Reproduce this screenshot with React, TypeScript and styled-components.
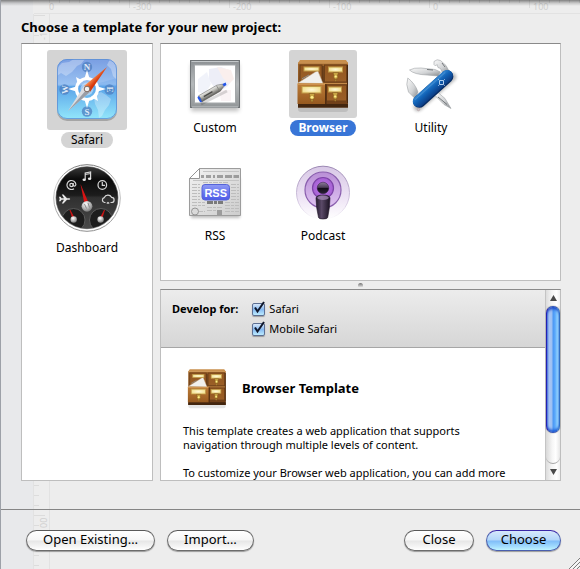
import React, { useState } from "react";
import styled, { createGlobalStyle, css } from "styled-components";

const GlobalStyle = createGlobalStyle`
  *, *::before, *::after { box-sizing: border-box; }
  html, body { margin: 0; padding: 0; background: #ededed; }
  body {
    font-family: "Noto Sans", "Open Sans", sans-serif;
    font-size: 12px;
    color: #000;
  }
  button, input { font: inherit; color: inherit; }
`;

const Sheet = styled.main`
  position: relative;
  display: flex;
  flex-direction: column;
  height: 100vh;
  min-height: 420px;
  border-left: 1px solid #9da1a8;
  background: linear-gradient(to right, #e8e9eb 0 32px, #ededed 32px);
  overflow: hidden;
`;

const Backdrop = styled.svg`
  position: absolute;
  inset: 0;
  width: 100%;
  height: 100%;
  pointer-events: none;
`;

const TopShadow = styled.div`
  position: absolute;
  inset: 0 0 auto 0;
  height: 6px;
  background: linear-gradient(rgba(0, 0, 0, 0.46), rgba(0, 0, 0, 0.16) 50%, rgba(0, 0, 0, 0));
`;

const Body = styled.section`
  position: relative;
  flex: 1;
  min-height: 0;
  display: flex;
  flex-direction: column;
  padding: 19px 19px 28px 20px;
  border-bottom: 1px solid #858585;
`;

const Title = styled.h1`
  margin: 0;
  height: 24px;
  font-size: 13px;
  line-height: 17px;
  font-weight: 700;
  white-space: nowrap;
`;

const Columns = styled.div`
  flex: 1;
  min-height: 0;
  display: grid;
  grid-template-columns: 132px minmax(0, 1fr);
  gap: 7px;
`;

const paneFrame = css`
  background: #fff;
  border: 1px solid #bebebe;
  border-top-color: #8a8a8a;
`;

const Sidebar = styled.nav`
  ${paneFrame}
  display: flex;
  flex-direction: column;
  align-items: center;
  gap: 10px;
  padding-top: 6px;
`;

const Detail = styled.div`
  display: flex;
  flex-direction: column;
  min-height: 0;
`;

const Gallery = styled.div`
  ${paneFrame}
  flex: 230 1 0;
  min-height: 0;
  display: grid;
  grid-template-columns: repeat(auto-fill, 108px);
  grid-auto-rows: 108px;
  align-items: start;
  justify-items: center;
  padding-top: 6px;
`;

const Splitter = styled.div`
  height: 8px;
  display: flex;
  align-items: center;
  justify-content: center;
`;

const Dimple = styled.span`
  width: 5px;
  height: 5px;
  border-radius: 50%;
  background: linear-gradient(#707070, #fafafa);
`;

const TileButton = styled.button`
  display: flex;
  flex-direction: column;
  align-items: center;
  gap: 2px;
  padding: 0;
  border: 0;
  background: none;
`;

const TileArt = styled.span<{ $selected: boolean; $size: number }>`
  display: block;
  width: ${(p) => p.$size}px;
  height: ${(p) => p.$size}px;
  border-radius: 3px;
  background: ${(p) => (p.$selected ? "#d4d4d4" : "transparent")};
  svg { display: block; }
`;

const TileLabel = styled.span<{ $tone: "plain" | "quiet" | "active" }>`
  height: 16px;
  padding: 0 10px;
  border-radius: 8px;
  font-size: 12px;
  line-height: 16px;
  white-space: nowrap;
  ${(p) => p.$tone === "quiet" && css`background: #d4d4d4;`}
  ${(p) => p.$tone === "active" && css`padding: 0 8px; background: #3875d7; color: #fff; font-weight: 700;`}
`;

const InfoPane = styled.div`
  ${paneFrame}
  flex: 190 1 0;
  min-height: 0;
  display: flex;
`;

const InfoScroll = styled.div`
  flex: 1;
  min-width: 0;
  overflow: hidden;
`;

const Options = styled.fieldset`
  display: flex;
  align-items: flex-start;
  gap: 14px;
  margin: 0;
  padding: 9px 11px;
  height: 58px;
  border: 0;
  border-bottom: 1px solid #a6a6a6;
  background: linear-gradient(#ececec, #d6d6d6);
  font-size: 11px;
  line-height: 20px;
`;

const OptionsTitle = styled.span`
  font-weight: 700;
`;

const OptionList = styled.div`
  display: flex;
  flex-direction: column;
`;

const OptionLabel = styled.label`
  display: flex;
  align-items: center;
  gap: 3px;
  height: 20px;
`;

const CheckWrap = styled.span`
  position: relative;
  display: block;
  width: 14px;
  height: 14px;
  svg { position: absolute; inset: 0; pointer-events: none; overflow: visible; }
`;

const Check = styled.input`
  appearance: none;
  display: block;
  width: 13px;
  height: 13px;
  margin: 1px 0 0 0;
  border: 1px solid #5d6f92;
  border-radius: 2px;
  background: #fff;
  box-shadow: 0 1px 1px rgba(0, 0, 0, 0.3);
  &:checked { background: linear-gradient(#d8e8fa, #86b9f1 50%, #bdecff); }
  &:not(:checked) + svg { display: none; }
`;

const Article = styled.article`
  padding: 19px 22px;
  font-size: 11px;
  line-height: 14px;
`;

const ArticleHead = styled.header`
  display: flex;
  align-items: center;
  gap: 15px;
  height: 42px;
  margin-bottom: 15px;
  padding-left: 4px;
`;

const ArticleTitle = styled.h2`
  margin: 0;
  font-size: 13px;
  line-height: 16px;
  font-weight: 700;
`;

const Paragraph = styled.p<{ $measure?: number }>`
  margin: 0 0 14px;
  max-width: ${(p) => p.$measure ?? 350}px;
`;

const ScrollRail = styled.div`
  width: 15px;
  display: flex;
  flex-direction: column;
  border-left: 1px solid #c4c4c4;
  background: linear-gradient(to right, #dcdcdc, #f4f4f4 40%, #fff 75%, #f0f0f0);
`;

const RailButton = styled.button`
  display: flex;
  align-items: center;
  justify-content: center;
  height: 16px;
  padding: 0;
  border: 0;
  background: none;
`;

const RailTrack = styled.div`
  flex: 1;
  border-radius: 0 0 7px 7px;
  border-bottom: 1px solid #a8a8a8;
  background: linear-gradient(to right, #d8d8d8, #f6f6f6 45%, #fff 70%, #e6e6e6);
`;

const RailThumb = styled.div`
  height: 81%;
  border-radius: 7px;
  border: 1px solid #2c50b8;
  border-left-color: #2420b4;
  border-right-color: #2f6fc4;
  background: linear-gradient(
    to right,
    #5d84e4 0, #a9c6f4 2px, #9cc0f3 5px, #4b97f3 6px, #5aa8fb 8px, #9cdcff 11px, #7fb9f4 12px
  );
  box-shadow: inset 0 3px 3px -1px #1a45c4, inset 0 -3px 3px -1px #1a58d4, 0 0 1px #333;
`;

const Footer = styled.footer`
  position: relative;
  display: flex;
  align-items: flex-start;
  gap: 12px;
  height: 59px;
  padding: 20px 19px 0 25px;
`;

const Spacer = styled.span`
  flex: 1;
`;

const AquaButton = styled.button<{ $primary?: boolean; $width: number }>`
  min-width: ${(p) => p.$width}px;
  height: 21px;
  padding: 0 8px 2px;
  border-radius: 11px;
  border: 1px solid ${(p) => (p.$primary ? "#4a5fae" : "#6c6c6c")};
  border-top-color: ${(p) => (p.$primary ? "#3a28a8" : "#5a5a5a")};
  background: ${(p) =>
    p.$primary
      ? "linear-gradient(#d6e8fb, #b2d6fa 48%, #7fbcf8 52%, #a0dafe 80%, #bff4ff)"
      : "linear-gradient(#ffffff, #f6f6f6 48%, #e6e6e6 52%, #f4f4f4 80%, #ffffff)"};
  box-shadow: 0 1px 1px rgba(0, 0, 0, 0.35);
  font-size: 13px;
  line-height: 17px;
  white-space: nowrap;
`;

const ResizeGrip = styled.svg`
  position: absolute;
  right: 0;
  bottom: 0;
`;

const range = (n: number) => Array.from({ length: n }, (_, i) => i);

function Rulers() {
  return (
    <Backdrop aria-hidden="true" stroke="#dcdcdc" fill="none" fontSize="9">
      <path d="M33 13.5H3000M32.5 14V3000M48.5 14V3000" stroke="#e2e2e2" />
      {range(200).map((i) => (
        <path key={i} d={`M${48.5 + i * 10} 0V${i % 10 === 8 ? 8 : 3}`} />
      ))}
      {range(200).map((i) => (
        <path key={i} d={`M33 ${15.5 + i * 10}H${i % 10 === 0 ? 44 : 38}`} />
      ))}
      <g stroke="none" fill="#d0d0d0">
        <text x="48" y="10">0</text>
        {range(5).map((i) => (
          <text key={i} x={132 + i * 100} y="10">{i * 100 - 300}</text>
        ))}
        <text transform="translate(46 40) rotate(-90)">-10</text>
        <text transform="translate(46 528) rotate(-90)">00</text>
      </g>
    </Backdrop>
  );
}

function SafariIcon() {
  return (
    <svg width="80" height="80" viewBox="0 0 80 80" aria-hidden="true">
      <defs>
        <linearGradient id="sfSky" x1="0" y1="0" x2="0" y2="1">
          <stop offset="0" stopColor="#6791df" />
          <stop offset=".42" stopColor="#8cbaf0" />
          <stop offset=".46" stopColor="#5aa3e8" />
          <stop offset="1" stopColor="#92e6fb" />
        </linearGradient>
        <linearGradient id="sfRed" x1="0" y1="0" x2="1" y2="1">
          <stop offset=".4" stopColor="#f58a50" />
          <stop offset=".55" stopColor="#d83a0c" />
          <stop offset="1" stopColor="#a52000" />
        </linearGradient>
        <clipPath id="sfClip"><rect x="10" y="9" width="60" height="60" rx="10" /></clipPath>
      </defs>
      <rect x="10" y="11" width="60" height="60" rx="10" fill="#000" opacity=".22" />
      <rect x="10" y="9" width="60" height="60" rx="10" fill="url(#sfSky)" />
      <g clipPath="url(#sfClip)" fill="#fff" opacity=".3">
        <path d="M10 18L15 13 22 12 27 9H38L34 14 30 16 25 22 19 26 14 23 10 26Z" />
        <path d="M63 9L70 9V30L66 26 64 19 60 15Z" />
        <path d="M49 44L54 42 59 45 64 49 62 55 58 60 55 66 52 68 51 60 48 54 47 48Z" />
      </g>
      <path d="M10 35.500Q40 38 70 28V18.500Q70 9 60 9H20Q10 9 10 18.500Z" fill="#fff" opacity=".12" />
      <rect x="10.500" y="9.500" width="59" height="59" rx="9.500" fill="none" stroke="#5c8fd4" opacity=".8" />
      <g fill="#4f7fc0" opacity=".75">
        <circle cx="40" cy="17" r="5.200" /><circle cx="40" cy="61.500" r="5.200" />
        <circle cx="17.500" cy="39.500" r="5.200" /><circle cx="62.500" cy="39.500" r="5.200" />
      </g>
      <g fill="#dfe9f6" fontFamily="Liberation Serif, serif" fontSize="9" fontWeight="700" textAnchor="middle">
        <text x="40" y="20">N</text>
        <text x="40" y="64.500">S</text>
        <text transform="translate(20.500 39.500) rotate(-90)">W</text>
        <text transform="translate(59.500 39.500) rotate(90)">E</text>
      </g>
      <circle cx="40" cy="39" r="10.500" fill="none" stroke="#fff" strokeWidth="3.200" />
      <path
        fill="#fff"
        d="M40 20L43 30H37ZM40 58L43 48H37ZM21 39L31 36V42ZM59 39L49 36V42ZM29 27L36 31 31 35ZM51 27L44 31 49 35ZM29 51L36 47 31 43ZM51 51L44 47 49 43Z"
      />
      <circle cx="40" cy="39" r="6.500" fill="#cfe4fa" opacity=".6" />
      <path d="M60 17L43 42 37 36Z" fill="url(#sfRed)" />
      <path d="M21 61L37 36 43 42Z" fill="#dcdde0" />
      <path d="M21 61L40 39 43 42Z" fill="#9a9ea6" />
      <circle cx="40" cy="39" r="2.800" fill="#f2f2f2" stroke="#7c6a62" />
    </svg>
  );
}

function DashboardIcon() {
  return (
    <svg width="80" height="80" viewBox="0 0 80 80" aria-hidden="true">
      <defs>
        <linearGradient id="dbFace" x1="0" y1="0" x2="0" y2="1">
          <stop offset="0" stopColor="#3a3a3a" />
          <stop offset=".2" stopColor="#0b0b0b" />
          <stop offset=".46" stopColor="#1c1c1c" />
          <stop offset=".5" stopColor="#303030" />
          <stop offset="1" stopColor="#4a4a4a" />
        </linearGradient>
        <linearGradient id="dbRim" x1="0" y1="0" x2="0" y2="1">
          <stop offset="0" stopColor="#777" />
          <stop offset=".3" stopColor="#ccc" />
          <stop offset="1" stopColor="#8c8c8c" />
        </linearGradient>
        <radialGradient id="dbHub" cx=".4" cy=".3" r=".8">
          <stop offset="0" stopColor="#fff" />
          <stop offset=".5" stopColor="#b9b9b9" />
          <stop offset="1" stopColor="#666" />
        </radialGradient>
        <clipPath id="dbClip"><circle cx="40" cy="39.700" r="30.500" /></clipPath>
      </defs>
      <circle cx="40" cy="40" r="33.300" fill="#fff" stroke="url(#dbRim)" />
      <circle cx="40" cy="39.700" r="31" fill="url(#dbFace)" stroke="#444" strokeWidth=".6" />
      <g clipPath="url(#dbClip)">
        <circle cx="26.500" cy="62" r="11.500" fill="#1d1d1d" stroke="#5b5b5b" />
        <circle cx="54" cy="62" r="11.500" fill="#1d1d1d" stroke="#5b5b5b" />
      </g>
      <path d="M33.500 26L42.500 47 38 48.500Z" fill="#d81414" />
      <path d="M23 52L28 61 26 62ZM57.500 52L54.500 62 52.500 61Z" fill="#d81414" stroke="#d81414" strokeWidth=".6" />
      <circle cx="40" cy="48.300" r="5.400" fill="url(#dbHub)" />
      <path d="M37.500 46L39.500 50.500M41 45L42.500 49.500" stroke="#777" strokeWidth=".8" />
      <circle cx="26.700" cy="61.500" r="3.200" fill="url(#dbHub)" />
      <circle cx="53.600" cy="61.500" r="3.200" fill="url(#dbHub)" />
      <g fill="none" stroke="#d6d6d6" strokeWidth="1.200">
        <path d="M38.200 21.500V15L43.600 14V20.500M38.200 16.500L43.600 15.500" />
        <circle cx="55.300" cy="27" r="4.300" />
        <path d="M55.300 24V27.300H58" />
        <path d="M57.500 44.500A2.500 2.500 0 0 1 57.300 39.600 4 4 0 0 1 64.500 39.300 2.600 2.600 0 0 1 64.500 44.500H63.500M57 44.500H58.500" />
        <path d="M59.800 45.500L61 44.600 62.200 45.500" />
        <circle cx="24.500" cy="27" r="1.700" />
        <path d="M26.200 25V27.600Q28.500 29 28.900 26.500A4.500 4.500 0 1 0 27 30.700" />
      </g>
      <g fill="#e8e8e8">
        <ellipse cx="37.200" cy="21.800" rx="1.700" ry="1.300" />
        <ellipse cx="42.600" cy="20.800" rx="1.700" ry="1.300" />
        <path d="M12 38.800L13.500 38.800 14.600 40.200H17L14.800 36.500H16.500L20 40.200H22.500Q24 41 22.500 41.800H20L16.500 45.500H14.800L17 41.800H14.600L13.500 43.200H12L12.700 41Z" />
      </g>
    </svg>
  );
}

function CabinetArt() {
  return (
    <>
      <defs>
        <linearGradient id="cbWood" x1="0" y1="0" x2="0" y2="1">
          <stop offset="0" stopColor="#a2672c" />
          <stop offset="1" stopColor="#6b3c17" />
        </linearGradient>
        <linearGradient id="cbDrawer" x1="0" y1="0" x2="0" y2="1">
          <stop offset="0" stopColor="#94571f" />
          <stop offset="1" stopColor="#9a5f28" />
        </linearGradient>
        <linearGradient id="cbFront" x1="0" y1="0" x2="0" y2="1">
          <stop offset="0" stopColor="#bd7c38" />
          <stop offset="1" stopColor="#96591f" />
        </linearGradient>
        <radialGradient id="cbPlate" cx=".5" cy=".5" r=".6">
          <stop offset="0" stopColor="#fff9d8" />
          <stop offset="1" stopColor="#f0dc86" />
        </radialGradient>
      </defs>
      <rect x="9" y="13" width="50" height="49" rx="3" fill="#000" opacity=".1" />
      <path d="M11 10H57L59 13H9Z" fill="#c88f4c" />
      <rect x="9" y="12.500" width="50" height="45" fill="url(#cbWood)" />
      <path d="M9 13H59" stroke="#d9a463" />
      <rect x="11" y="15" width="22" height="17" fill="url(#cbDrawer)" stroke="#6b3f18" />
      <rect x="35.500" y="15" width="22" height="17" fill="url(#cbDrawer)" stroke="#6b3f18" />
      <rect x="37.500" y="35" width="20" height="16" fill="url(#cbDrawer)" stroke="#6b3f18" />
      <path d="M35 33.500H59" stroke="#c58a48" />
      <path d="M9 54H59V57.500H9Z" fill="#43260f" />
      <path d="M34 16V32M58.500 15V53" stroke="#4a280e" />
      <path d="M9 33L28.700 20.500 34 33.500Z" fill="#f1f0ed" stroke="#c9b79c" strokeWidth=".5" />
      <path d="M13 28.800L20 25" stroke="#8e8e8e" strokeWidth="1" />
      <rect x="8.500" y="33.500" width="28" height="20.500" fill="url(#cbFront)" />
      <path d="M8.500 34H36.500" stroke="#dfa967" />
      <path d="M36.800 34V54" stroke="#3c1f0a" />
      <g fill="url(#cbPlate)" stroke="#c09a48" strokeWidth="1">
        <rect x="15" y="17" width="15" height="4" />
        <rect x="39.500" y="17" width="14" height="5" />
        <rect x="13" y="36.500" width="19" height="6.500" />
        <rect x="39.500" y="37" width="13" height="5" />
      </g>
      <g fill="#c9a544" stroke="#7a521c" strokeWidth=".5">
        <path d="M44 22.500H49.500L48.500 25.500A2.200 2.200 0 1 1 45 25.500ZM43.500 42.500H49L48 45.500A2.200 2.200 0 1 1 44.500 45.500ZM20 43.500H26L25 46A2.500 2.500 0 1 1 21 46Z" />
        <path d="M45.500 29.500H48L46.800 31.500ZM45 49.500H47.500L46.200 51.500ZM21.500 50H24.500L23 52.500Z" />
      </g>
      <g fill="#fff08c"><circle cx="46.700" cy="26.500" r="1.100" /><circle cx="46.200" cy="46.500" r="1.100" /><circle cx="23" cy="47.300" r="1.400" /></g>
    </>
  );
}

function BrowserIcon() {
  return (
    <svg width="68" height="68" viewBox="0 0 68 68" aria-hidden="true"><CabinetArt /></svg>
  );
}

function SmallCabinet() {
  return (
    <svg width="40" height="42" viewBox="8 7 52 56" aria-hidden="true"><CabinetArt /></svg>
  );
}

function CustomIcon() {
  return (
    <svg width="68" height="68" viewBox="0 0 68 68" aria-hidden="true">
      <defs>
        <linearGradient id="csFrame" x1="0" y1="0" x2="0" y2="1">
          <stop offset="0" stopColor="#8d9194" />
          <stop offset=".5" stopColor="#b4b8ba" />
          <stop offset="1" stopColor="#929698" />
        </linearGradient>
        <linearGradient id="csPen" x1="0" y1="0" x2="0" y2="1">
          <stop offset="0" stopColor="#eeeeec" />
          <stop offset=".45" stopColor="#b4b4ae" />
          <stop offset="1" stopColor="#5c5c58" />
        </linearGradient>
        <filter id="csSoft" x="-20%" y="-20%" width="140%" height="140%"><feGaussianBlur stdDeviation="2" /></filter>
      </defs>
      <rect x="10" y="14" width="48" height="47" fill="#000" opacity=".25" filter="url(#csSoft)" />
      <rect x="9.500" y="10.500" width="49" height="47" fill="url(#csFrame)" stroke="#6f7376" />
      <path d="M10.500 11.500H57.500M11 57H57" stroke="#c4c8ca" />
      <rect x="13.500" y="15" width="41" height="38" fill="#fff" stroke="#a3a7a9" />
      <g opacity=".13">
        <path d="M28 19L40 17 48 20 52 28 47 36 41 40 33 37 28 30Z" fill="#7a86c8" />
        <path d="M36 17L50 20 53 29 48 34 42 28Z" fill="#e08a78" />
        <path d="M17 29L26 22 30 34 24 44 17 42Z" fill="#9aa9de" />
        <path d="M38 40H50V51H40Z" fill="#dfa7b4" />
      </g>
      <path d="M20 54L46 41" stroke="#000" strokeWidth="3" opacity=".14" />
      <g transform="translate(17.500 49.500) rotate(-30)">
        <rect x="0" y="-3" width="3" height="6.800" rx="1.500" fill="#2456e8" />
        <path d="M2 -3.200H23Q26.500 -2 28.500 -1.200V1.400Q26 2.400 23 3.700H2Q3.200 0 2 -3.200Z" fill="url(#csPen)" stroke="#5f5f5c" strokeWidth=".5" />
        <path d="M28.500 -1.500L32 -1.200 31.500 1.500H28.500Z" fill="#2456e8" />
        <path d="M6 .2H16" stroke="#4b4b48" strokeWidth="1.300" />
        <path d="M22.500 -3V3.500" stroke="#7c7c78" strokeWidth=".7" />
      </g>
    </svg>
  );
}

function UtilityIcon() {
  return (
    <svg width="68" height="68" viewBox="0 0 68 68" aria-hidden="true">
      <defs>
        <linearGradient id="utBody" x1="0" y1="0" x2="0" y2="1">
          <stop offset="0" stopColor="#3385d0" />
          <stop offset=".4" stopColor="#1264b8" />
          <stop offset="1" stopColor="#0c3c84" />
        </linearGradient>
        <linearGradient id="utSteel" x1="0" y1="0" x2="1" y2="1">
          <stop offset="0" stopColor="#fafafa" />
          <stop offset=".55" stopColor="#d2d4d6" />
          <stop offset="1" stopColor="#85898c" />
        </linearGradient>
        <filter id="utSoft" x="-30%" y="-30%" width="160%" height="160%"><feGaussianBlur stdDeviation="1.500" /></filter>
      </defs>
      <path d="M21 57L55 27" stroke="#000" strokeWidth="9" strokeLinecap="round" opacity=".25" filter="url(#utSoft)" />
      <g fill="url(#utSteel)" stroke="#a0a3a6" strokeWidth=".6">
        <path d="M10.800 28Q8.500 34 11.500 42L18 48.500 21 42Q18 33.500 10.800 28Z" />
        <path d="M12.500 20Q17 17.500 24 18L38 19.500 43.500 22 41 26 30 25Q17 24.500 12.500 20Z" />
        <path d="M37 11.500Q40 8.500 43.500 10.500L49 15.500 52 21 46 24 43.500 18.500 41 17.500 40 14.500 38.500 16 37 14.500Z" />
        <path d="M38 45.500L41 42.500 48 48.500 54 58.500 47 54.500Z" />
      </g>
      <path d="M30 19.500L36 20M41 47L50 54.500M45 13L48 17" stroke="#676b6e" strokeWidth=".9" />
      <g transform="translate(21 52) rotate(-42)">
        <rect x="-5" y="-5.800" width="50" height="12.600" rx="6.300" fill="#062c63" />
        <rect x="-5" y="-5.800" width="50" height="11.300" rx="5.600" fill="url(#utBody)" />
        <path d="M-1 -3.700H40" stroke="#73b4ea" strokeWidth="1" opacity=".35" />
      </g>
      <path
        d="M42.500 30.500H46.500V34.500H42.500ZM42 30L41.300 29.300M47 30L47.700 29.300M42 35L41.300 35.700M47 35L47.700 35.700"
        fill="none" stroke="#c4ddf6" strokeWidth=".9"
      />
      <circle cx="21.500" cy="59.500" r="1.200" fill="none" stroke="#b6a0a4" strokeWidth=".8" />
    </svg>
  );
}

function RssIcon() {
  return (
    <svg width="68" height="68" viewBox="0 0 68 68" aria-hidden="true">
      <defs>
        <linearGradient id="rsPage" x1="0" y1="0" x2="1" y2="1">
          <stop offset="0" stopColor="#f1f1f1" />
          <stop offset="1" stopColor="#cdcdcd" />
        </linearGradient>
        <linearGradient id="rsBadge" x1="0" y1="0" x2="0" y2="1">
          <stop offset="0" stopColor="#8f9bf5" />
          <stop offset=".5" stopColor="#6a77ee" />
          <stop offset="1" stopColor="#4d5be8" />
        </linearGradient>
        <filter id="rsSoft" x="-20%" y="-20%" width="140%" height="140%"><feGaussianBlur stdDeviation="1.800" /></filter>
      </defs>
      <rect x="10" y="20" width="49" height="40" fill="#000" opacity=".25" filter="url(#rsSoft)" />
      <path d="M18.500 10.500H59.500V57.500H8.500V20.500Z" fill="url(#rsPage)" stroke="#9c9c9c" />
      <path d="M20 18.500H23M25 18.500H30M32 18.500H34M36 18.500H42M44 18.500H51M52.500 18.500H58" stroke="#808080" strokeWidth="3" opacity=".7" />
      <path d="M22 13.500H58M12 22.500H58" stroke="#c4c4c4" />
      <path
        d="M11 26.500H19M11 29.500H19M11 32.500H19M11 35.500H19M11 38.500H19M11 41.500H19M11 44.500H24M11 47.500H24M50 26.500H58M50 29.500H58M50 32.500H58M50 35.500H58M50 38.500H58M50 41.500H58M44 44.500H58M44 47.500H58M26 49.500H41M26 52.500H41M44 50.500H58M44 53.500H58M22 24.500H47M17 53.500H24"
        stroke="#bdbdbd" strokeDasharray="5 1 3 1"
      />
      <path d="M26 44.500H42" stroke="#7a7a7a" strokeWidth="3" strokeDasharray="6 1 3 1" />
      <circle cx="14" cy="53.500" r="3.500" fill="#dadada" stroke="#959595" />
      <rect x="36" y="52" width="5" height="5" fill="#9c9c9c" />
      <path d="M18.500 10.500V20.500H8.500Z" fill="#fff" stroke="#949494" />
      <rect x="21" y="26.500" width="27.500" height="15.500" rx="3" fill="url(#rsBadge)" stroke="#5563d8" />
      <text x="34.700" y="38.500" fill="#fff" fontFamily="Liberation Sans, sans-serif" fontSize="11" fontWeight="700" textAnchor="middle">RSS</text>
    </svg>
  );
}

function PodcastIcon() {
  return (
    <svg width="68" height="68" viewBox="0 0 68 68" aria-hidden="true">
      <defs>
        <linearGradient id="pcOuter" x1="0" y1="0" x2="0" y2="1">
          <stop offset="0" stopColor="#d8c8e6" />
          <stop offset=".6" stopColor="#eee4f5" />
          <stop offset="1" stopColor="#ffffff" />
        </linearGradient>
        <linearGradient id="pcEdge" x1="0" y1="0" x2="0" y2="1">
          <stop offset="0" stopColor="#9a86b2" />
          <stop offset=".7" stopColor="#d8cce4" />
          <stop offset="1" stopColor="#ffffff" />
        </linearGradient>
        <linearGradient id="pcMid" x1="0" y1="0" x2="0" y2="1">
          <stop offset="0" stopColor="#b98fd6" />
          <stop offset="1" stopColor="#e0c5f2" />
        </linearGradient>
        <radialGradient id="pcIn">
          <stop offset="0" stopColor="#c67cf4" />
          <stop offset="1" stopColor="#a35fd0" />
        </radialGradient>
        <linearGradient id="pcHead" x1="0" y1="0" x2="0" y2="1">
          <stop offset="0" stopColor="#8d7d9b" />
          <stop offset=".45" stopColor="#4c3e58" />
          <stop offset=".5" stopColor="#120c18" />
          <stop offset="1" stopColor="#2c2236" />
        </linearGradient>
        <linearGradient id="pcBody" x1="0" y1="0" x2="1" y2="0">
          <stop offset="0" stopColor="#241a2e" />
          <stop offset=".4" stopColor="#5b4a68" />
          <stop offset="1" stopColor="#1a1221" />
        </linearGradient>
      </defs>
      <circle cx="34" cy="34.700" r="26.500" fill="url(#pcOuter)" stroke="url(#pcEdge)" />
      <circle cx="34" cy="32" r="18" fill="url(#pcMid)" stroke="#8a5fae" strokeWidth="1.200" />
      <circle cx="34" cy="30" r="10.500" fill="url(#pcIn)" stroke="#7d43a8" strokeWidth="1.200" />
      <circle cx="34" cy="30" r="5.800" fill="url(#pcHead)" stroke="#2a1c36" strokeWidth=".5" />
      <path d="M27 40Q27.500 37 34 37T41 40Q41 49 38.700 59.500Q38 61 34 61T29.500 59.500Q27 49 27 40Z" fill="url(#pcBody)" stroke="#1c1224" strokeWidth=".6" />
      <ellipse cx="34" cy="39.800" rx="5.800" ry="2.200" fill="#a88bb9" opacity=".75" />
    </svg>
  );
}

type Item = { name: string; Icon: () => React.JSX.Element };

const targets: Item[] = [
  { name: "Safari", Icon: SafariIcon },
  { name: "Dashboard", Icon: DashboardIcon },
];

const templates: Item[] = [
  { name: "Custom", Icon: CustomIcon },
  { name: "Browser", Icon: BrowserIcon },
  { name: "Utility", Icon: UtilityIcon },
  { name: "RSS", Icon: RssIcon },
  { name: "Podcast", Icon: PodcastIcon },
];

type TileProps = { item: Item; size: number; selected: boolean; tone: "quiet" | "active"; onSelect: () => void };

function Tile({ item, size, selected, tone, onSelect }: TileProps) {
  return (
    <TileButton type="button" aria-pressed={selected} onClick={onSelect}>
      <TileArt $selected={selected} $size={size}><item.Icon /></TileArt>
      <TileLabel $tone={selected ? tone : "plain"}>{item.name}</TileLabel>
    </TileButton>
  );
}

function Option({ label }: { label: string }) {
  return (
    <OptionLabel>
      <CheckWrap>
        <Check type="checkbox" defaultChecked />
        <svg width="14" height="14" viewBox="0 0 14 14" aria-hidden="true">
          <path d="M3 5.500L5.500 9.500 12 0" fill="none" stroke="#10182c" strokeWidth="2" />
        </svg>
      </CheckWrap>
      {label}
    </OptionLabel>
  );
}

export default function App() {
  const [target, setTarget] = useState("Safari");
  const [template, setTemplate] = useState("Browser");
  return (
    <>
      <GlobalStyle />
      <Sheet>
        <Rulers />
        <TopShadow />
        <Body>
          <Title>Choose a template for your new project:</Title>
          <Columns>
            <Sidebar aria-label="Project type">
              {targets.map((t) => (
                <Tile key={t.name} item={t} size={80} tone="quiet" selected={t.name === target} onSelect={() => setTarget(t.name)} />
              ))}
            </Sidebar>
            <Detail>
              <Gallery>
                {templates.map((t) => (
                  <Tile key={t.name} item={t} size={68} tone="active" selected={t.name === template} onSelect={() => setTemplate(t.name)} />
                ))}
              </Gallery>
              <Splitter><Dimple /></Splitter>
              <InfoPane>
                <InfoScroll>
                  <Options aria-labelledby="develop-for">
                    <OptionsTitle id="develop-for">Develop for:</OptionsTitle>
                    <OptionList>
                      <Option label="Safari" />
                      <Option label="Mobile Safari" />
                    </OptionList>
                  </Options>
                  <Article>
                    <ArticleHead>
                      <SmallCabinet />
                      <ArticleTitle>Browser Template</ArticleTitle>
                    </ArticleHead>
                    <Paragraph $measure={300}>
                      This template creates a web application that supports navigation through multiple levels of content.
                    </Paragraph>
                    <Paragraph>To customize your Browser web application, you can add more</Paragraph>
                  </Article>
                </InfoScroll>
                <ScrollRail>
                  <RailButton type="button" aria-label="Scroll up">
                    <svg width="7" height="6" viewBox="0 0 7 6"><path d="M3.500 0L7 6H0Z" fill="#4a4a4a" /></svg>
                  </RailButton>
                  <RailTrack><RailThumb /></RailTrack>
                  <RailButton type="button" aria-label="Scroll down">
                    <svg width="7" height="6" viewBox="0 0 7 6"><path d="M0 0H7L3.500 6Z" fill="#4a4a4a" /></svg>
                  </RailButton>
                </ScrollRail>
              </InfoPane>
            </Detail>
          </Columns>
        </Body>
        <Footer>
          <AquaButton type="button" $width={129}>Open Existing…</AquaButton>
          <AquaButton type="button" $width={87}>Import…</AquaButton>
          <Spacer />
          <AquaButton type="button" $width={70}>Close</AquaButton>
          <AquaButton type="button" $width={75} $primary>Choose</AquaButton>
          <ResizeGrip width="11" height="11" viewBox="0 0 11 11" aria-hidden="true">
            <path d="M0 11L11 0M4 11L11 4M8 11L11 8" stroke="#7c7c7c" />
            <path d="M1.500 11L11 1.500M5.500 11L11 5.500" stroke="#fff" />
          </ResizeGrip>
        </Footer>
      </Sheet>
    </>
  );
}
